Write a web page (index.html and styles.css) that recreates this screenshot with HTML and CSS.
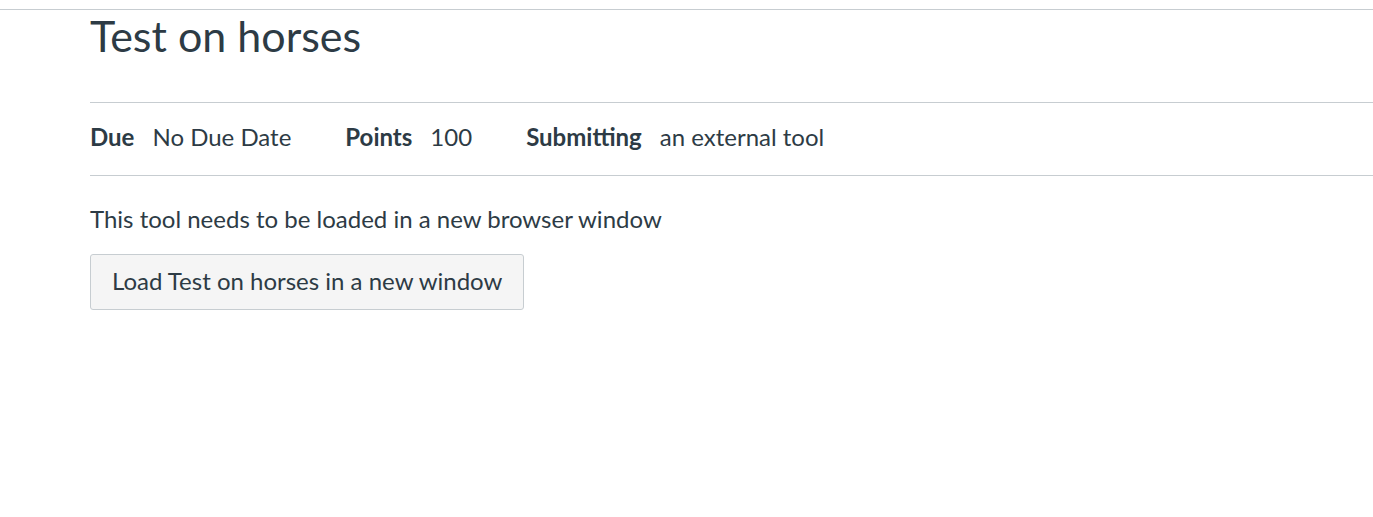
FILE: index.html
```html
<!DOCTYPE html>
<html>
<head>
<meta charset="utf-8">
<link rel="stylesheet" href="styles.css">
</head>
<body>
<div class="topbar"></div>
<main class="content">
  <div class="title-block">
    <h1 class="title">Test on horses</h1>
  </div>
  <ul class="meta">
    <li class="meta-item"><span class="meta-label">Due</span><span class="meta-value">No Due Date</span></li>
    <li class="meta-item"><span class="meta-label">Points</span><span class="meta-value">100</span></li>
    <li class="meta-item"><span class="meta-label">Submitting</span><span class="meta-value">an external tool</span></li>
  </ul>
  <p class="notice">This tool needs to be loaded in a new browser window</p>
  <button class="btn" type="button">Load Test on horses in a new window</button>
</main>
</body>
</html>
```
FILE: styles.css
```css
html, body {
  margin: 0;
  padding: 0;
  background: #fff;
}
body {
  font-family: Lato, "Noto Sans", sans-serif;
  color: #2D3B45;
}
.topbar {
  height: 9px;
  border-bottom: 1px solid #C7CDD1;
}
.content {
  padding-left: 90px;
}
.title-block {
  border-bottom: 1px solid #C7CDD1;
  height: 92px;
}
.title {
  margin: 0;
  font-size: 43px;
  font-weight: 400;
  line-height: 1.2;
}
.meta {
  list-style: none;
  margin: 0;
  padding: 0 0 6px;
  box-sizing: border-box;
  height: 73px;
  border-bottom: 1px solid #C7CDD1;
  display: flex;
  align-items: center;
  gap: 54px;
  font-size: 24px;
}
.meta-item {
  display: flex;
  gap: 18px;
}
.meta-label {
  font-weight: 700;
}
.notice {
  margin: 27px 0 0;
  font-size: 24px;
  line-height: 1.3;
}
.btn {
  display: block;
  margin-top: 20px;
  font-family: inherit;
  font-size: 24px;
  color: #2D3B45;
  background: #F5F5F5;
  border: 1px solid #C7CDD1;
  border-radius: 3px;
  box-sizing: border-box;
  height: 56px;
  padding: 0 21px 4px;
  cursor: pointer;
}
```
